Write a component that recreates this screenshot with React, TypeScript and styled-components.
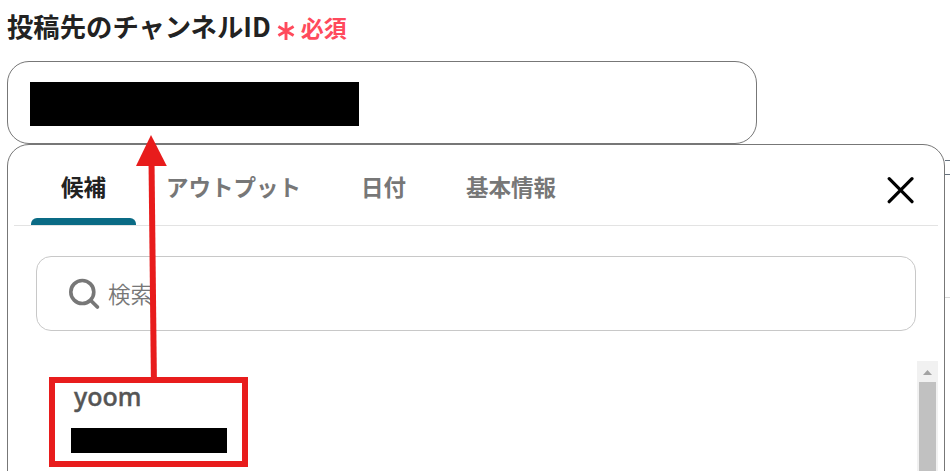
import { useState } from 'react';
import styled, { createGlobalStyle } from 'styled-components';

const COLORS = {
  text: '#222222',
  sub: '#777777',
  border: '#777777',
  required: '#ff4a5c',
  active: '#0a6b85',
  mark: '#e81c1c',
};

const GlobalStyle = createGlobalStyle`
  * {
    box-sizing: border-box;
  }

  body {
    margin: 0;
    background-color: #ffffff;
    font-family: 'Noto Sans CJK JP', 'Noto Sans', sans-serif;
  }
`;

const Container = styled.div`
  position: relative;
  width: 950px;
  height: 471px;
  padding-left: 7px;
  overflow: hidden;
`;

const Label = styled.div`
  height: 61px;
  display: flex;
  align-items: flex-start;
`;

const LabelText = styled.div`
  margin-top: 6px;
  line-height: 40px;
  font-size: 26.35px;
  font-weight: 700;
  color: ${COLORS.text};
  white-space: nowrap;
`;

const RequiredIcon = styled.svg`
  margin: 21px 0 0 6px;
`;

const RequiredText = styled.div`
  margin: 7px 0 0 6px;
  line-height: 40px;
  font-size: 23px;
  font-weight: 700;
  color: ${COLORS.required};
`;

const Field = styled.div`
  width: 750px;
  height: 83px;
  padding: 20px 22px;
  border: 1px solid ${COLORS.border};
  border-radius: 22px;
`;

const Mask = styled.div<{ $width: number; $height: number }>`
  width: ${({ $width }) => $width}px;
  height: ${({ $height }) => $height}px;
  background-color: #000000;
`;

const PanelRow = styled.div`
  display: flex;
`;

const Panel = styled.div`
  width: 938px;
  height: 380px;
  flex-shrink: 0;
  padding: 0 6px;
  border: 1px solid ${COLORS.border};
  border-radius: 22px;
`;

const Behind = styled.div`
  flex: 1;
  padding-top: 16px;
`;

const BehindBox = styled.div`
  height: 15px;
  border-top: 1px solid #66727e;
  border-bottom: 1px solid #66727e;
`;

const BehindLine = styled.div`
  height: 1px;
  margin-top: 122px;
  background-color: #d8d8d8;
`;

const TabBar = styled.div`
  height: 81px;
  padding-left: 17px;
  display: flex;
  border-bottom: 1px solid #e3e3e3;
`;

const Tab = styled.div<{ $active: boolean }>`
  height: 80px;
  padding: 0 30px;
  display: flex;
  flex-direction: column;
  justify-content: flex-end;
  font-size: 22.5px;
  font-weight: 700;
  line-height: 34px;
  color: ${({ $active }) => ($active ? COLORS.text : COLORS.sub)};
  white-space: nowrap;
  cursor: pointer;
`;

const TabIndicator = styled.div<{ $active: boolean }>`
  height: 7px;
  margin: 15px -30px 0;
  border-radius: 6px 6px 0 0;
  background-color: ${({ $active }) =>
    $active ? COLORS.active : 'transparent'};
`;

const CloseIcon = styled.svg`
  margin: 31px 23px 0 auto;
`;

const SearchBox = styled.div`
  width: 880px;
  height: 75px;
  margin: 30px 0 0 22px;
  padding-left: 32px;
  display: flex;
  align-items: center;
  border: 1px solid #c8c8c8;
  border-radius: 15px;
`;

const SearchInput = styled.input`
  width: 700px;
  height: 40px;
  margin: 0 0 2px 7px;
  padding: 0;
  border: none;
  outline: none;
  font-family: inherit;
  font-size: 22.5px;
  font-weight: 350;
  color: ${COLORS.text};

  &::placeholder {
    color: ${COLORS.sub};
    opacity: 1;
  }
`;

const ListArea = styled.div`
  height: 150px;
  margin-top: 30px;
  display: flex;
  justify-content: space-between;
`;

const ListItem = styled.div`
  padding: 17px 0 0 57px;
`;

const ListItemName = styled.div`
  height: 50px;
  padding-left: 3px;
  font-family: 'Noto Sans', sans-serif;
  font-size: 25px;
  font-weight: 500;
  line-height: 36px;
  color: #555555;
  -webkit-text-stroke: 0.4px #555555;
`;

const ScrollBar = styled.div`
  width: 21px;
  display: flex;
  flex-direction: column;
  align-items: center;
  background-color: #f1f1f1;
`;

const ScrollThumb = styled.div`
  width: 17px;
  flex: 1;
  background-color: #c1c1c1;
`;

const MarkOverlay = styled.svg`
  position: absolute;
  top: 0;
  left: 0;
  pointer-events: none;
`;

const TABS = ['候補', 'アウトプット', '日付', '基本情報'];

function App() {
  const [tab, setTab] = useState<string>(TABS[0]);
  const [keyword, setKeyword] = useState('');

  return (
    <>
      <GlobalStyle />
      <Container>
        <Label>
          <LabelText>投稿先のチャンネルID</LabelText>
          <RequiredIcon width="18" height="20" viewBox="0 0 18 20">
            <path
              d="M9 1v18M1.4 5.6l15.2 8.8M16.6 5.6l-15.2 8.8"
              fill="none"
              stroke={COLORS.required}
              strokeWidth="2.9"
            />
          </RequiredIcon>
          <RequiredText>必須</RequiredText>
        </Label>
        <Field>
          <Mask $width={329} $height={44} />
        </Field>
        <PanelRow>
          <Panel>
            <TabBar>
              {TABS.map((name) => (
                <Tab
                  key={name}
                  $active={name === tab}
                  onClick={() => setTab(name)}
                >
                  {name}
                  <TabIndicator $active={name === tab} />
                </Tab>
              ))}
              <CloseIcon width="28" height="28" viewBox="0 0 28 28">
                <path
                  d="M2.2 2.7l22.8 23M25 2.7l-22.8 23"
                  stroke="#000000"
                  strokeWidth="3.2"
                  strokeLinecap="round"
                />
              </CloseIcon>
            </TabBar>
            <SearchBox>
              <svg width="32" height="32" viewBox="0 0 32 32">
                <circle
                  cx="13.3"
                  cy="14"
                  r="11.5"
                  fill="none"
                  stroke={COLORS.sub}
                  strokeWidth="3.6"
                />
                <path
                  d="M21.8 22.5l6.6 6.5"
                  stroke={COLORS.sub}
                  strokeWidth="3.8"
                  strokeLinecap="round"
                />
              </svg>
              <SearchInput
                placeholder="検索"
                value={keyword}
                onChange={(e) => setKeyword(e.target.value)}
              />
            </SearchBox>
            <ListArea>
              <ListItem>
                <ListItemName>yoom</ListItemName>
                <Mask $width={156} $height={25} />
              </ListItem>
              <ScrollBar>
                <svg width="21" height="21" viewBox="0 0 21 21">
                  <path d="M6 14l4.5-5 4.5 5z" fill="#a3a3a3" />
                </svg>
                <ScrollThumb />
              </ScrollBar>
            </ListArea>
          </Panel>
          <Behind>
            <BehindBox />
            <BehindLine />
          </Behind>
        </PanelRow>
        <MarkOverlay width="950" height="471" viewBox="0 0 950 471">
          <rect
            x="52"
            y="380"
            width="193"
            height="84"
            fill="none"
            stroke={COLORS.mark}
            strokeWidth="6"
          />
          <path d="M153.9 380L151.5 160" stroke={COLORS.mark} strokeWidth="6" />
          <path d="M151 135l15.8 31H136z" fill={COLORS.mark} />
        </MarkOverlay>
      </Container>
    </>
  );
}

export default App;
